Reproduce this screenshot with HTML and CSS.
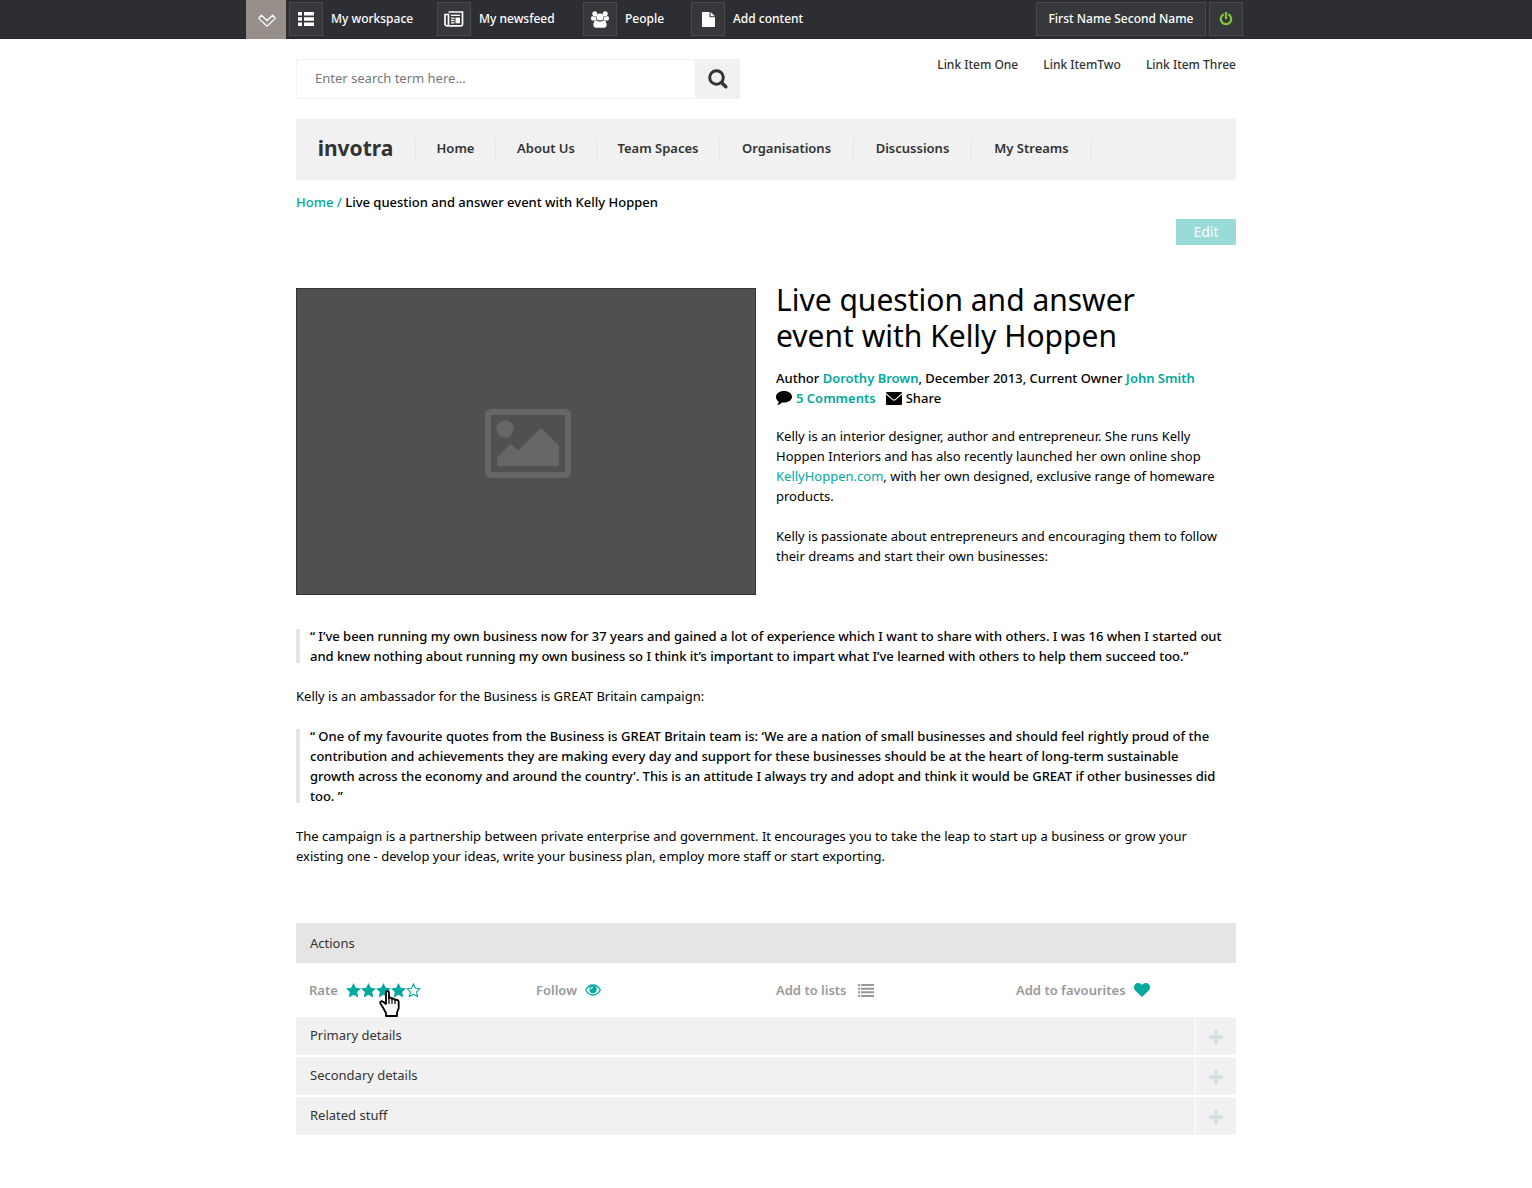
FILE: index.html
```html
<!DOCTYPE html>
<html lang="en">
<head>
<meta charset="utf-8">
<title>Live question and answer event with Kelly Hoppen</title>
<link rel="stylesheet" href="styles.css">
</head>
<body>
<svg width="0" height="0" class="sprite" aria-hidden="true">
  <symbol id="star" viewBox="0 0 15 15"><path d="M7.500 0l2.300 4.700 5.200.7-3.800 3.600 1 5.400-4.700-2.600-4.700 2.600 1-5.400L0 5.400l5.200-.7z"/></symbol>
  <symbol id="plus" viewBox="0 0 14 14"><rect x="5" width="4" height="14" rx="1"/><rect y="5" width="14" height="4" rx="1"/></symbol>
</svg>
<header class="topbar">
  <div class="topbar-inner">
    <button class="toggle" aria-label="Collapse toolbar"><svg width="18" height="13" viewBox="0 0 18 13" fill="none" stroke="#fff" stroke-width="1.300" stroke-linejoin="round"><path d="M3.300 1.300L9 6.500l5.700-5.200L16.800 3.600c.4.500.3.900-.1 1.300L9.700 11.600c-.5.500-.9.500-1.400 0L1.300 4.900c-.4-.4-.5-.8-.1-1.300z"/></svg></button>
    <nav class="tools" aria-label="Tools">
      <a href="#"><span class="tool"><svg width="16" height="14" viewBox="0 0 16 14" fill="#fff"><path d="M0 0h4v3.500H0zM6 0h10v3.500H6zM0 5.200h4v3.500H0zM6 5.200h10v3.500H6zM0 10.400h4v3.500H0zM6 10.400h10v3.500H6z"/></svg></span>My workspace</a>
      <a href="#"><span class="tool"><svg width="20" height="16" viewBox="0 0 20 16" fill="none" stroke="#fff" stroke-width="1.700"><path d="M4.500 1H18.500V13.500c0 .8-.5 1.300-1.300 1.300H2.700C1.600 14.800 1 14 1 13V3.500H4.500V13c0 1-.6 1.700-1.600 1.700"/><path d="M7 4.300h9" stroke-width="1.400"/><path d="M7 7.200h3.500M7 9.500h3.500M7 11.800h3.500" stroke-width="1.300"/><path d="M11.500 6.500H16v5.800h-4.500z" fill="#fff" stroke="none"/></svg></span>My newsfeed</a>
      <a href="#"><span class="tool"><svg width="18" height="17" viewBox="0 0 18 17" fill="#fff"><circle cx="3.800" cy="2.800" r="2.500"/><circle cx="14.200" cy="2.800" r="2.500"/><path d="M0 7.500C0 5.500.8 5 2 5.200c1.300.6 2 .6 3 .1C4.600 7.300 5 8.500 6 9.600H2C.7 9.600 0 9 0 7.500zM18 7.500c0-2-.8-2.500-2-2.300-1.300.6-2 .6-3 .1.400 2 0 3.200-1 4.300h4c1.300 0 2-.6 2-2.100z"/><circle cx="9" cy="6" r="3.600"/><path d="M2.400 14.200c0-2.500.8-4.600 3-4.600 2.200 1.500 5 1.500 7.200 0 2.200 0 3 2.100 3 4.600 0 1.500-1 2.500-2.500 2.500H4.900c-1.500 0-2.500-1-2.500-2.500z"/></svg></span>People</a>
      <a href="#"><span class="tool"><svg width="13" height="15" viewBox="0 0 13 15" fill="#fff"><path d="M1 0h6.500v5.200H13V14c0 .6-.4 1-1 1H1c-.6 0-1-.4-1-1V1c0-.6.4-1 1-1z"/><path d="M8.600 0L13 4.200H8.600z"/></svg></span>Add content</a>
    </nav>
    <div class="account">
      <button class="user">First Name Second Name</button>
      <button class="tool" aria-label="Log out"><svg width="14" height="14" viewBox="0 0 14 14" fill="none" stroke="#83c736" stroke-width="2.200"><path d="M4 2.700a5.200 5.200 0 1 0 6 0" stroke-linecap="round"/><path d="M7 0v7"/></svg></button>
    </div>
  </div>
</header>
<main class="page">
  <div class="head">
    <form class="search">
      <input type="text" aria-label="Search" placeholder="Enter search term here...">
      <button type="button" aria-label="Search"><svg width="20" height="20" viewBox="0 0 20 20" fill="none" stroke="#333" stroke-width="3"><circle cx="8.500" cy="8.500" r="6.800"/><path d="M13.500 13.500l4.300 4.300" stroke-width="3.400" stroke-linecap="round"/></svg></button>
    </form>
    <nav class="links" aria-label="Quick links"><a href="#">Link Item One</a><a href="#">Link ItemTwo</a><a href="#">Link Item Three</a></nav>
  </div>
  <nav class="mainnav" aria-label="Main">
    <a class="logo" href="#">invotra</a>
    <a href="#">Home</a><a href="#">About Us</a><a href="#">Team Spaces</a><a href="#">Organisations</a><a href="#">Discussions</a><a href="#">My Streams</a><span></span>
  </nav>
  <div class="crumbs"><a href="#">Home /</a> <span>Live question and answer event with Kelly Hoppen</span></div>
  <div class="editbar"><button class="edit">Edit</button></div>

  <article>
    <section class="hero">
      <div class="photo"><svg width="86" height="69" viewBox="0 0 86 69" fill="#666"><rect x="3" y="3" width="80" height="63" rx="3" fill="none" stroke="#666" stroke-width="6"/><circle cx="20" cy="20" r="8.700"/><path d="M12 57V48l13.500-13 7.500 6.500L56 19l18 17.500V57z"/></svg></div>
      <div class="intro">
        <h1>Live question and answer<br>event with Kelly Hoppen</h1>
        <div class="meta">Author <a href="#">Dorothy Brown</a>, December 2013, Current Owner <a href="#">John Smith</a></div>
        <div class="meta social">
          <svg width="16" height="14" viewBox="0 0 16 14"><path d="M8 0c4.500 0 8 2.500 8 5.800s-3.500 5.800-8 5.800c-.7 0-1.400 0-2-.2C4.500 12.900 3 13.700 1 14c1-1 1.600-2 1.700-3.300C1 9.600 0 7.800 0 5.800 0 2.500 3.500 0 8 0z"/></svg>
          <a href="#">5 Comments</a>
          <svg class="mail" width="16" height="13" viewBox="0 0 16 13"><path d="M1 0h14c.6 0 1 .3 1 1.100L9 7.200c-.7.500-1.300.5-2 0L0 1.100C0 .4.400 0 1 0zM0 2.500l6.400 5.600c1.100.8 2.100.8 3.200 0L16 2.500V12c0 .6-.4 1-1 1H1c-.6 0-1-.4-1-1z"/></svg>
          <a class="share" href="#">Share</a>
        </div>
        <p>Kelly is an interior designer, author and entrepreneur. She runs Kelly<br>Hoppen Interiors and has also recently launched her own online shop<br><a href="#">KellyHoppen.com</a>, with her own designed, exclusive range of homeware<br>products.</p>
        <p>Kelly is passionate about entrepreneurs and encouraging them to follow<br>their dreams and start their own businesses:</p>
      </div>
    </section>
    <blockquote><p>“ I’ve been running my own business now for 37 years and gained a lot of experience which I want to share with others. I was 16 when I started out<br>and knew nothing about running my own business so I think it’s important to impart what I’ve learned with others to help them succeed too.”</p></blockquote>
    <p>Kelly is an ambassador for the Business is GREAT Britain campaign:</p>
    <blockquote><p>“ One of my favourite quotes from the Business is GREAT Britain team is: ‘We are a nation of small businesses and should feel rightly proud of the<br>contribution and achievements they are making every day and support for these businesses should be at the heart of long-term sustainable<br>growth across the economy and around the country’. This is an attitude I always try and adopt and think it would be GREAT if other businesses did<br>too. ”</p></blockquote>
    <p>The campaign is a partnership between private enterprise and government. It encourages you to take the leap to start up a business or grow your<br>existing one - develop your ideas, write your business plan, employ more staff or start exporting.</p>
  </article>

  <section class="panel">
    <h2>Actions</h2>
    <div class="actions">
      <div class="action rate">Rate
        <span class="stars">
          <button aria-label="1 star"><svg width="15" height="15"><use href="#star"/></svg></button><button aria-label="2 stars"><svg width="15" height="15"><use href="#star"/></svg></button><button aria-label="3 stars"><svg width="15" height="15"><use href="#star"/></svg></button><button aria-label="4 stars"><svg width="15" height="15"><use href="#star"/></svg></button><button aria-label="5 stars"><svg width="15" height="15" viewBox="0 0 15 15" fill="none" stroke="#00a99d" stroke-width="1.100"><path d="M7.500 1.100l1.900 4.100 4.500.6-3.300 3.100.9 4.600-4-2.300-4 2.300.9-4.600-3.300-3.100 4.500-.6z"/></svg></button>
          <svg class="pointer" width="21" height="27" viewBox="0 0 21 27" fill="#fff" stroke="#000" stroke-width="1.800" stroke-linejoin="round"><path d="M7 14V3c0-2.400 3-2.400 3 0v5.500c.6-1.400 3-1 3 .8.600-1.300 3-.9 3 1 .8-1 3.700-.5 3.700 1.800v6L18 22.500V26H7V23L4.500 18.500 1.500 13.500c-.8-1.500.8-3 2.700-1.800z"/><path d="M10 8.500V14M13 9.300V14M16 10.300V14" stroke-width="1.200"/></svg>
        </span>
      </div>
      <button class="action">Follow <svg width="16" height="12" viewBox="0 0 16 12"><path d="M.7 6C2.500 2.700 5 1 8 1s5.500 1.700 7.300 5C13.500 9.300 11 11 8 11S2.500 9.300.7 6z" fill="none" stroke="#00a99d" stroke-width="1.300"/><circle cx="8" cy="5.500" r="3.700" fill="#00a99d"/><path d="M5.800 5.500A2.200 2.200 0 0 1 8 3.300" stroke="#fff" fill="none"/></svg></button>
      <button class="action">Add to lists <svg class="list" width="16" height="13" viewBox="0 0 16 13" fill="#999"><path d="M0 0h2v2H0zM3 0h13v2H3zM0 3.700h2v2H0zM3 3.700h13v2H3zM0 7.300h2v2H0zM3 7.300h13v2H3zM0 11h2v2H0zM3 11h13v2H3z"/></svg></button>
      <button class="action">Add to favourites <svg width="16" height="14" viewBox="0 0 16 14" fill="#00a99d"><path d="M8 14L1.300 7.500C.5 6.700 0 5.600 0 4.300 0 1.700 1.700 0 4.200 0 5.800 0 7.200.9 8 2.200 8.800.9 10.200 0 11.800 0 14.300 0 16 1.700 16 4.300c0 1.300-.5 2.400-1.300 3.200z"/></svg></button>
    </div>
    <div class="drawers">
      <button><span>Primary details</span><i><svg width="14" height="14"><use href="#plus"/></svg></i></button>
      <button><span>Secondary details</span><i><svg width="14" height="14"><use href="#plus"/></svg></i></button>
      <button><span>Related stuff</span><i><svg width="14" height="14"><use href="#plus"/></svg></i></button>
    </div>
  </section>
</main>
</body>
</html>
```
FILE: styles.css
```css
* { box-sizing: border-box; }
body { margin: 0; background: #fff; color: #000; font: 13px/20px "Noto Sans", "Open Sans", sans-serif; }
a { color: #00a99d; text-decoration: none; }
button { border: 0; padding: 0; margin: 0; background: none; font: inherit; color: inherit; cursor: pointer; }
svg { display: block; flex: none; }
p { margin: 0; }
.sprite { position: absolute; }

.topbar { background: #2d2e33; border-bottom: 1px solid #26262b; }
.topbar-inner { display: flex; align-items: center; max-width: 1040px; height: 38px; margin: 0 auto; padding-right: 43px; font-size: 12px; font-weight: 500; color: #fff; }
.toggle { width: 40px; height: 39px; align-self: flex-start; display: grid; place-items: center; padding: 2px 0 0 2px; background: #968f8a; }
.tools { display: grid; grid-template-columns: 148px 146px 108px 140px; margin-left: 3px; }
.tools a { display: flex; align-items: center; gap: 8px; color: #fff; white-space: nowrap; }
.tool, .user { display: grid; place-items: center; width: 34px; height: 34px; border: 1px solid #4b4a49; background: #37383c; }
.user { width: 170px; }
.account { display: flex; gap: 3px; margin-left: auto; }

.page { max-width: 940px; margin: 0 auto; padding-bottom: 52px; }
.head { display: flex; justify-content: space-between; padding: 20px 0; }
.search { display: flex; width: 444px; height: 40px; }
.search input { flex: 1; min-width: 0; padding: 0 18px 2px; border: 1px solid #f3f3f3; border-right: 0; background: #fff; font: inherit; color: #666; outline: 0; }
.search input::placeholder { color: #777; opacity: 1; }
.search button { width: 45px; display: grid; place-items: center; background: #f1f1f1; }
.links { display: flex; gap: 25px; height: 12px; line-height: 12px; font-size: 12px; font-weight: 500; }
.links a { color: #333; }
.mainnav { display: grid; grid-template-columns: 119px 80px 101px 123px 134px 118px 120px 1fr; align-content: center; height: 61px; background: #f1f1f1; font-weight: 600; }
.mainnav > * { height: 22px; line-height: 18px; color: #333; text-align: center; white-space: nowrap; }
.mainnav > * + * { border-left: 1px solid #e5e5e5; }
.mainnav .logo { font-size: 21px; font-weight: 700; }
.crumbs { margin-top: 12px; font-weight: 500; }
.editbar { display: flex; justify-content: flex-end; margin-top: 7px; }
.edit { width: 60px; height: 26px; background: #99dcd7; color: #fff; font-size: 14px; }

article { margin-top: 37px; white-space: nowrap; }
article > * + * { margin-top: 20px; }
.hero { display: grid; grid-template-columns: 460px 1fr; gap: 20px; }
.photo { display: grid; place-items: center; height: 307px; margin-top: 6px; padding: 4px 0 0 4px; border: 1px solid #333; background: #505050; }
h1 { margin: 0 0 14px; font-size: 30px; line-height: 36px; font-weight: 400; }
.meta { font-weight: 500; }
.meta a { font-weight: 600; }
.social { display: flex; align-items: center; gap: 4px; }
.social .mail { margin-left: 6px; }
.meta .share { color: #000; font-weight: 500; }
.intro p { margin-top: 18px; }
.intro p + p { margin-top: 20px; }
blockquote { display: flex; margin: 20px 0 0; font-weight: 500; }
.hero + blockquote { margin-top: 31px; }
blockquote::before { content: ""; width: 4px; margin: 3px 10px 3px 0; background: #e5e5e5; }

.panel { margin-top: 57px; }
h2 { margin: 0; padding: 10px 14px; background: #e5e5e5; font-size: 13px; font-weight: 400; color: #333; }
.actions { display: grid; grid-template-columns: 227px 240px 240px 1fr; align-items: center; height: 54px; padding-left: 13px; color: #999; font-weight: 600; }
.action { display: flex; align-items: center; gap: 8px; white-space: nowrap; }
.action .list { margin-left: 3px; }
.stars { position: relative; display: flex; }
.stars button { fill: #00a99d; }
.pointer { position: absolute; left: 33px; top: 7px; }
.drawers { display: grid; gap: 2px; }
.drawers button { display: grid; grid-template-columns: 1fr 40px; gap: 1px; height: 38px; text-align: left; color: #333; }
.drawers span, .drawers i { height: 38px; background: #f1f1f1; }
.drawers span { padding: 8px 14px; }
.drawers i { display: grid; place-items: center; padding-top: 2px; fill: #d6dfe4; }
```
